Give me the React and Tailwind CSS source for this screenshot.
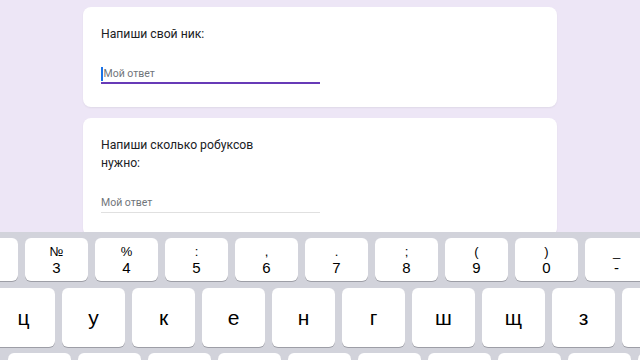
import React from "react";

const numberKeys = [
  ["", ""],
  ["№", "3"],
  ["%", "4"],
  [":", "5"],
  [",", "6"],
  [".", "7"],
  [";", "8"],
  ["(", "9"],
  [")", "0"],
  ["_", "-"],
];

const letterKeys = ["ц", "у", "к", "е", "н", "г", "ш", "щ", "з", ""];

const Card = ({ lines, active }) => (
  <div className="bg-white rounded-[8px] shadow-[0_1px_2px_rgba(0,0,0,0.06)] pl-[18px] pt-[18px] pb-[23px] w-[474px]">
    <div className="text-[12.2px] leading-[18px] text-[#202124]">
      {lines.map(l => (
        <div key={l}>{l}</div>
      ))}
    </div>
    <div className="mt-[23px] w-[219px]">
      <div className="flex items-center h-[16px] text-[10.5px] text-[#70757a]">
        {active && <span className="w-[1.5px] h-[14px] bg-[#1a73e8] mr-[1px]"></span>}
        Мой ответ
      </div>
      <div className={active ? "h-[2px] bg-[#673ab7]" : "h-[1px] mt-[1px] bg-[#e0e0e0]"}></div>
    </div>
  </div>
);

const Key = ({ children, className }) => (
  <div className={"shrink-0 w-[63px] bg-white rounded-[6px] shadow-[0_1px_0_#9d9ea6] flex flex-col items-center justify-center text-black " + (className || "")}>
    {children}
  </div>
);

export default function App() {
  return (
    <div className="w-[640px] h-[360px] overflow-hidden bg-[#ede6f6]" style={{ fontFamily: "Roboto, 'Noto Sans', sans-serif" }}>
      <div className="h-[232px] overflow-hidden flex flex-col items-center pt-[7px] gap-[11px]">
        <Card lines={["Напиши свой ник:"]} active />
        <Card lines={["Напиши сколько робуксов", "нужно:"]} />
      </div>
      <div className="h-[128px] bg-[#d2d3db] pt-[6px] flex flex-col gap-[7px]" style={{ fontFamily: "'Liberation Sans', Inter, sans-serif" }}>
        <div className="flex gap-[7px] ml-[-45px]">
          {numberKeys.map(([top, bottom], i) => (
            <Key key={i} className="h-[43px]">
              <span className="text-[13px] leading-[15px]">{top}</span>
              <span className="text-[15px] leading-[17px]">{bottom}</span>
            </Key>
          ))}
        </div>
        <div className="flex gap-[7px] ml-[-8px]">
          {letterKeys.map((k, i) => (
            <Key key={i} className="h-[59px] text-[21px]">
              {k}
            </Key>
          ))}
        </div>
        <div className="flex gap-[7px] ml-[8px] -mt-[1px]">
          {letterKeys.map((k, i) => (
            <Key key={i} className="h-[59px]"></Key>
          ))}
        </div>
      </div>
    </div>
  );
}
